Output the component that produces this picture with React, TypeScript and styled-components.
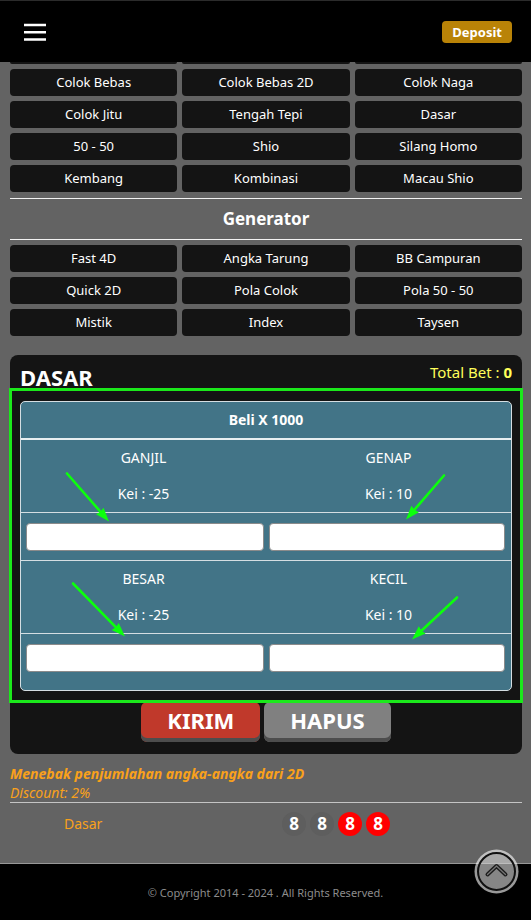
import React from "react";
import styled, { createGlobalStyle, css } from "styled-components";

const GlobalStyle = createGlobalStyle`
  * { box-sizing: border-box; }
  body {
    margin: 0;
    background: #636363;
    color: #fff;
    font-family: "Noto Sans", "Open Sans", sans-serif;
    font-size: 14px;
    line-height: 20px;
  }
  button, input { font-family: inherit; }
`;

const Page = styled.div`
  display: flex;
  flex-direction: column;
  min-height: 100vh;
`;

const Header = styled.header`
  position: sticky;
  top: 0;
  z-index: 5;
  display: flex;
  align-items: center;
  justify-content: space-between;
  height: 62px;
  padding: 0 19px 0 24px;
  background: #000;
  border-top: 1px solid #2b2b2b;
`;

const MenuButton = styled.button`
  display: flex;
  padding: 0;
  border: 0;
  background: none;
  color: #fff;
`;

const DepositButton = styled.button`
  height: 22px;
  padding: 0 10px;
  border: 0;
  border-radius: 4px;
  background: #b98307;
  color: #fff;
  font-size: 13px;
  font-weight: 700;
  line-height: 22px;
`;

const Main = styled.main`
  flex: 1;
  padding: 0 9px 0 10px;
`;

const MenuGrid = styled.nav`
  display: grid;
  grid-template-columns: repeat(3, 1fr);
  gap: 5px;
  padding: 5px 0 6px;
`;

const MenuTail = styled.div`
  display: grid;
  grid-template-columns: repeat(3, 1fr);
  gap: 5px;
`;

const MenuTailEdge = styled.div`
  height: 2px;
  border-radius: 0 0 4px 4px;
  background: #141414;
`;

const MenuLink = styled.a`
  height: 27px;
  border-radius: 4px;
  background: #141414;
  color: #fff;
  font-size: 13px;
  line-height: 27px;
  text-align: center;
  text-decoration: none;
`;

const SectionTitle = styled.h2`
  margin: 0;
  border: solid #f2f2f2;
  border-width: 1px 0;
  font-size: 17px;
  line-height: 40px;
  text-align: center;
`;

const Panel = styled.section`
  margin-top: 13px;
  padding: 0 10px 12px;
  border-radius: 8px;
  background: #141414;
`;

const PanelHead = styled.div`
  display: flex;
  justify-content: space-between;
  height: 46px;
`;

const PanelTitle = styled.h1`
  margin: 0;
  font-size: 22px;
  line-height: 44px;
`;

const TotalBet = styled.p`
  margin: 0;
  color: #ffff5a;
  font-size: 15px;
  line-height: 34px;
`;

const Highlighted = styled.div`
  position: relative;
`;

const Highlight = styled.div`
  position: absolute;
  inset: -13px -11px -12px;
  border: 3px solid #1be81b;
  pointer-events: none;

  svg {
    display: block;
    width: 100%;
    height: 100%;
  }
`;

const BetTable = styled.table`
  width: 100%;
  border: 1px solid #d5dee2;
  border-radius: 5px;
  border-spacing: 0;
  background: #427487;
  table-layout: fixed;
`;

const TableTitle = styled.th`
  height: 38px;
  padding: 0;
  border-bottom: 2px solid #e8eef0;
`;

const InfoCell = styled.td<{ $ruled?: boolean }>`
  height: 36px;
  padding: 0;
  text-align: center;
  ${(p) =>
    p.$ruled &&
    css`
      height: 37px;
      border-bottom: 1px solid #d5dee2;
    `}
`;

const InputCell = styled.td<{ $side: "left" | "right"; $last?: boolean }>`
  padding: ${(p) => (p.$side === "left" ? "10px 2px 9px 5px" : "10px 6px 9px 3px")};
  ${(p) =>
    p.$last
      ? css`padding-bottom: 18px;`
      : css`border-bottom: 1px solid #d5dee2;`}
`;

const BetInput = styled.input`
  display: block;
  width: 100%;
  height: 28px;
  padding: 0 8px;
  border: 1px solid #8b8b8b;
  border-radius: 4px;
  background: #fff;
  font-size: 14px;
`;

const Actions = styled.div`
  display: flex;
  justify-content: center;
  gap: 4px;
  margin-top: 11px;
`;

const ActionButton = styled.button<{ $primary?: boolean }>`
  height: 40px;
  padding: 0 26px;
  border: 0;
  border-radius: 6px;
  box-shadow: inset 0 -4px #4d4d4d;
  background: ${(p) => (p.$primary ? "#c0392b" : "#808080")};
  color: #fff;
  font-size: 22px;
  font-weight: 700;
  line-height: 36px;
  padding-bottom: 4px;
`;

const Notes = styled.div`
  padding-top: 10px;
  border-bottom: 1px solid #c4c4c4;
  color: #f9a11b;
  font-style: italic;
  line-height: 19px;

  p { margin: 0; }
`;

const Example = styled.div`
  display: grid;
  grid-template-columns: 2fr 5fr;
  align-items: center;
  padding: 9px 0 27px;
  color: #f9a11b;
  text-align: center;
`;

const Balls = styled.div`
  display: flex;
  justify-content: center;
  gap: 4px;
  padding-right: 6px;
`;

const Ball = styled.span<{ $hot?: boolean }>`
  width: 24px;
  height: 24px;
  border-radius: 50%;
  background: ${(p) => (p.$hot ? "#f00" : "#5e5e5e")};
  color: #fff;
  font-size: 17px;
  font-weight: 700;
  line-height: 24px;
`;

const Footer = styled.footer`
  padding: 19px 0 17px;
  border-top: 1px solid #989898;
  background: #000;
  color: #8c8c8c;
  font-size: 11px;
  text-align: center;
`;

const TopButton = styled.button`
  position: fixed;
  right: 12px;
  bottom: 26px;
  z-index: 6;
  display: flex;
  padding: 0;
  border: 0;
  background: none;
`;

const betMenu = [
  "Colok Bebas", "Colok Bebas 2D", "Colok Naga",
  "Colok Jitu", "Tengah Tepi", "Dasar",
  "50 - 50", "Shio", "Silang Homo",
  "Kembang", "Kombinasi", "Macau Shio",
];

const generatorMenu = [
  "Fast 4D", "Angka Tarung", "BB Campuran",
  "Quick 2D", "Pola Colok", "Pola 50 - 50",
  "Mistik", "Index", "Taysen",
];

const bets = [
  [{ name: "GANJIL", kei: -25 }, { name: "GENAP", kei: 10 }],
  [{ name: "BESAR", kei: -25 }, { name: "KECIL", kei: 10 }],
];

const arrows = [
  [67, 473, 109, 521],
  [444, 475, 406, 519],
  [73, 583, 125, 636],
  [457, 597, 412, 639],
];

function Menu({ label, items }: { label: string; items: string[] }) {
  return (
    <MenuGrid aria-label={label}>
      {items.map((item) => (
        <MenuLink key={item} href="#">{item}</MenuLink>
      ))}
    </MenuGrid>
  );
}

function Arrow({ points }: { points: number[] }) {
  const [x1, y1, x2, y2] = points;
  const length = Math.hypot(x2 - x1, y2 - y1);
  const angle = (Math.atan2(y2 - y1, x2 - x1) * 180) / Math.PI;
  return (
    <g transform={`translate(${x1} ${y1}) rotate(${angle})`}>
      <path d={`M0 0H${length - 10}`} stroke="#0cff0c" strokeWidth="2.6" strokeLinecap="round" />
      <path d={`M${length} 0l-14 -5l1 5l-1 5z`} fill="#0cff0c" />
    </g>
  );
}

export default function App() {
  return (
    <Page>
      <GlobalStyle />
      <Header>
        <MenuButton aria-label="Menu">
          <svg width="22" height="18" viewBox="0 0 22 18" fill="currentColor">
            <path d="M0 .7h22v2.5H0zM0 8h22v2.5H0zM0 15.2h22v2.5H0z" />
          </svg>
        </MenuButton>
        <DepositButton>Deposit</DepositButton>
      </Header>

      <Main>
        <MenuTail>
          <MenuTailEdge />
          <MenuTailEdge />
          <MenuTailEdge />
        </MenuTail>
        <Menu label="Bets" items={betMenu} />
        <SectionTitle>Generator</SectionTitle>
        <Menu label="Generator" items={generatorMenu} />

        <Panel>
          <PanelHead>
            <PanelTitle>DASAR</PanelTitle>
            <TotalBet>Total Bet : <b>0</b></TotalBet>
          </PanelHead>
          <Highlighted>
            <BetTable>
              <thead>
                <tr><TableTitle colSpan={2}>Beli X 1000</TableTitle></tr>
              </thead>
              <tbody>
                {bets.map((pair, row) => (
                  <React.Fragment key={row}>
                    <tr>
                      {pair.map((bet) => (
                        <InfoCell key={bet.name}>
                          <label htmlFor={bet.name}>{bet.name}</label>
                        </InfoCell>
                      ))}
                    </tr>
                    <tr>
                      {pair.map((bet) => (
                        <InfoCell key={bet.name} $ruled>Kei : {bet.kei}</InfoCell>
                      ))}
                    </tr>
                    <tr>
                      {pair.map((bet, col) => (
                        <InputCell
                          key={bet.name}
                          $side={col === 0 ? "left" : "right"}
                          $last={row === bets.length - 1}
                        >
                          <BetInput id={bet.name} type="text" inputMode="numeric" />
                        </InputCell>
                      ))}
                    </tr>
                  </React.Fragment>
                ))}
              </tbody>
            </BetTable>
            <Highlight>
              <svg viewBox="12 391 508 308" fill="none" aria-hidden="true">
                {arrows.map((points) => (
                  <Arrow key={points.join()} points={points} />
                ))}
              </svg>
            </Highlight>
          </Highlighted>
          <Actions>
            <ActionButton $primary>KIRIM</ActionButton>
            <ActionButton>HAPUS</ActionButton>
          </Actions>
        </Panel>

        <Notes>
          <p><b>Menebak penjumlahan angka-angka dari 2D</b></p>
          <p>Discount: 2%</p>
        </Notes>
        <Example>
          <span>Dasar</span>
          <Balls>
            <Ball>8</Ball>
            <Ball>8</Ball>
            <Ball $hot>8</Ball>
            <Ball $hot>8</Ball>
          </Balls>
        </Example>
      </Main>

      <Footer>© Copyright 2014 - 2024 . All Rights Reserved.</Footer>

      <TopButton aria-label="Back to top">
        <svg width="45" height="45" viewBox="0 0 45 45" fill="none">
          <circle cx="22.5" cy="22.5" r="22" fill="#fff" fillOpacity="0.6" />
          <circle cx="22.5" cy="22.5" r="18.5" fill="#000" fillOpacity="0.12" stroke="#111" strokeWidth="2" />
          <path d="M13.5 25.5l9-8.5l9 8.5" stroke="#1c1c1c" strokeWidth="4" strokeLinecap="round" strokeLinejoin="round" />
          <path d="M13.5 25.5l9-8.5l9 8.5" stroke="#777" strokeWidth="1.2" strokeLinecap="round" strokeLinejoin="round" />
        </svg>
      </TopButton>
    </Page>
  );
}
